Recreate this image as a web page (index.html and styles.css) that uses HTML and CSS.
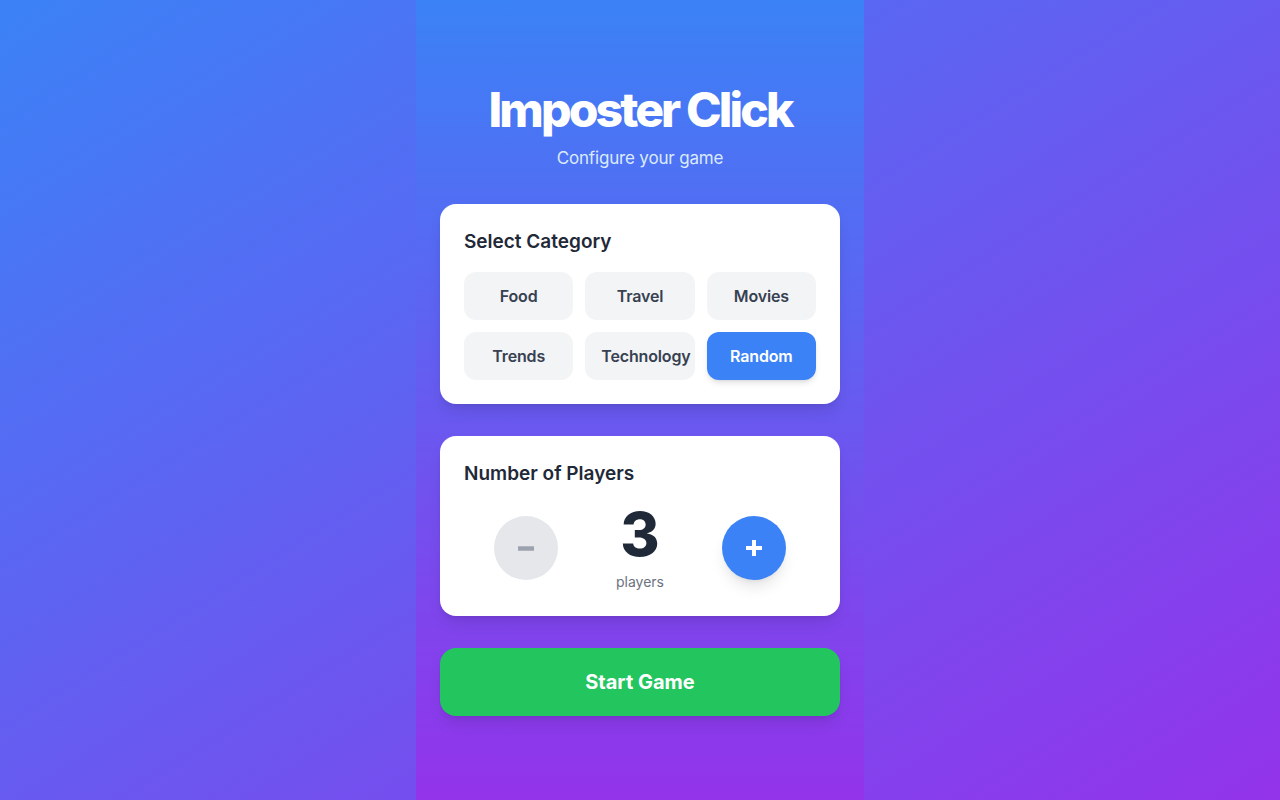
FILE: index.html
```html
<!DOCTYPE html>
<html lang="en">
<head>
<meta charset="utf-8">
<title>Imposter Click</title>
<link rel="stylesheet" href="styles.css">
</head>
<body>
<div class="page">
  <main class="column">
    <header class="header">
      <h1 class="title">Imposter Click</h1>
      <p class="subtitle">Configure your game</p>
    </header>

    <section class="card">
      <h2 class="card-title">Select Category</h2>
      <div class="categories">
        <button class="cat">Food</button>
        <button class="cat">Travel</button>
        <button class="cat">Movies</button>
        <button class="cat">Trends</button>
        <button class="cat">Technology</button>
        <button class="cat cat-active">Random</button>
      </div>
    </section>

    <section class="card">
      <h2 class="card-title">Number of Players</h2>
      <div class="players-row">
        <button class="round round-minus" aria-label="Decrease">
          <svg width="18" height="18" viewBox="0 0 18 18"><path d="M1 9.5h16" stroke="#9ca3af" stroke-width="4.5" stroke-linecap="butt"/></svg>
        </button>
        <div class="count">
          <div class="count-num">3</div>
          <div class="count-label">players</div>
        </div>
        <button class="round round-plus" aria-label="Increase">
          <svg width="18" height="18" viewBox="0 0 18 18"><path d="M9 1v16M1 9h16" stroke="#ffffff" stroke-width="4" stroke-linecap="butt"/></svg>
        </button>
      </div>
    </section>

    <button class="start">Start Game</button>
  </main>
</div>
</body>
</html>
```

FILE: styles.css
```css
* { box-sizing: border-box; }
html, body { margin: 0; padding: 0; }
body {
  font-family: Inter, "Noto Sans", "Liberation Sans", sans-serif;
  background: linear-gradient(to bottom right, #3b82f6, #9333ea);
  min-height: 100vh;
}
.page {
  display: flex;
  justify-content: center;
  min-height: 100vh;
}
.column {
  width: 448px;
  min-height: 100vh;
  background: linear-gradient(to bottom, #3b82f6, #9333ea);
  padding: 86px 24px 24px;
  display: flex;
  flex-direction: column;
  gap: 32px;
}
.header { text-align: center; }
.title {
  margin: 0;
  font-size: 48px;
  line-height: 48px;
  font-weight: 800;
  letter-spacing: -0.06em;
  color: #fff;
}
.subtitle {
  margin: 10px 0 0;
  font-size: 17px;
  line-height: 28px;
  letter-spacing: -0.01em;
  color: #dbeafe;
}
.card {
  background: #fff;
  border-radius: 16px;
  padding: 24px;
  box-shadow: 0 10px 15px -3px rgba(0,0,0,0.1), 0 4px 6px -4px rgba(0,0,0,0.1);
}
.card-title {
  margin: 0 0 16px;
  font-size: 19px;
  line-height: 28px;
  font-weight: 600;
  color: #1f2937;
}
.categories {
  display: grid;
  grid-template-columns: repeat(3, 1fr);
  gap: 12px;
}
.cat {
  font-family: inherit;
  border: 0;
  height: 48px;
  border-radius: 12px;
  background: #f3f4f6;
  color: #374151;
  font-size: 16px;
  font-weight: 600;
  letter-spacing: -0.01em;
  padding: 0 16px;
  white-space: nowrap;
  min-width: 0;
}
.cat-active {
  background: #3b82f6;
  color: #fff;
  box-shadow: 0 4px 6px -1px rgba(0,0,0,0.1), 0 2px 4px -2px rgba(0,0,0,0.1);
}
.players-row {
  display: flex;
  justify-content: center;
  align-items: center;
  gap: 32px;
}
.round {
  width: 64px;
  height: 64px;
  border-radius: 50%;
  border: 0;
  display: flex;
  align-items: center;
  justify-content: center;
  padding: 0;
}
.round svg { display: block; }
.round-minus { background: #e5e7eb; }
.round-plus {
  background: #3b82f6;
  box-shadow: 0 10px 15px -3px rgba(0,0,0,0.1), 0 4px 6px -4px rgba(0,0,0,0.1);
}
.count {
  width: 100px;
  text-align: center;
}
.count-num {
  font-size: 60px;
  line-height: 60px;
  font-weight: 800;
  color: #1f2937;
}
.count-label {
  margin-top: 8px;
  font-size: 14px;
  line-height: 20px;
  color: #6b7280;
}
.start {
  font-family: inherit;
  border: 0;
  width: 100%;
  height: 68px;
  border-radius: 16px;
  background: #22c55e;
  color: #fff;
  font-size: 20px;
  font-weight: 700;
  box-shadow: 0 10px 15px -3px rgba(0,0,0,0.1), 0 4px 6px -4px rgba(0,0,0,0.1);
}
```
